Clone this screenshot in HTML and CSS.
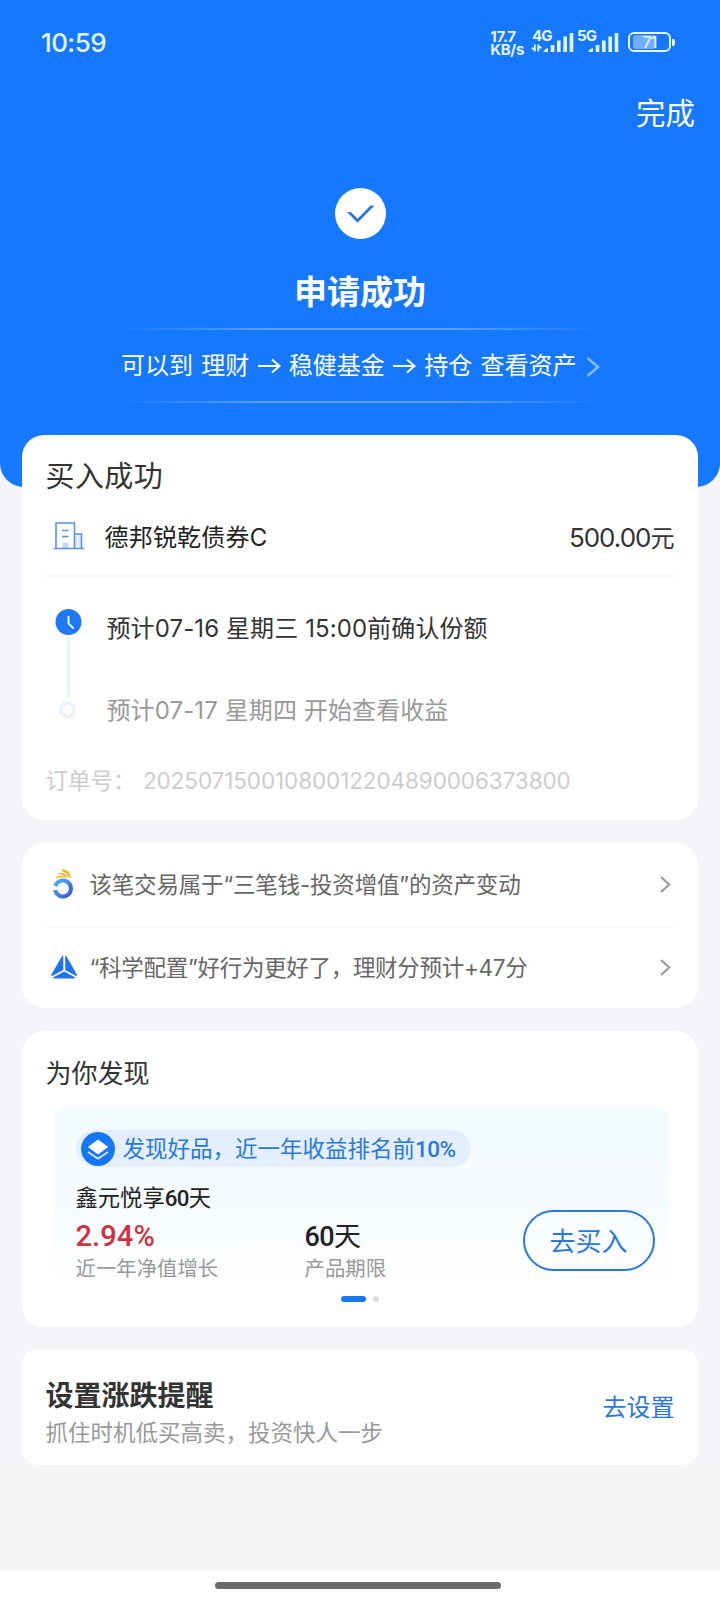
FILE: index.html
```html
<!DOCTYPE html>
<html lang="zh-CN">
<head>
<meta charset="utf-8">
<title>申请成功</title>
<link rel="stylesheet" href="styles.css">
</head>
<body>
<div class="page">
  <header class="hero">
    <div class="status">
      <span class="clock">10:59</span>
      <span class="speed"><span>17.7</span><span>KB/s</span></span>
      <svg class="signals" width="88" height="34" viewBox="0 -4 88 34">
        <text class="net" x="1" y="12">4G</text>
        <text class="net" x="46" y="12">5G</text>
        <path class="arrows" d="M0.800 18.800L3.800 21.300M3.800 15.500V22.500M7.300 22.500V15.500M7.300 16.500L10.300 19.300"/>
        <path class="wedge" d="M12.500 23Q12.500 20.500 17 19V23ZM57.500 23Q57.500 20.500 62 19V23Z"/>
        <path class="bars" d="M21.500 23V16M27.800 23V11.500M34.200 23V7.500M40.500 23V4M66.500 23V16M72.800 23V11.500M79.200 23V7.500M85.500 23V4"/>
      </svg>
      <span class="battery"><span class="level"></span><span class="percent">71</span></span>
      <span class="nub"></span>
    </div>
    <div class="done">完成</div>
    <svg class="check" width="51" height="51" viewBox="0 0 51 51">
      <circle cx="25.500" cy="25.500" r="25.500" fill="#fff"/>
      <path d="M12 24H15.800L22.500 30.800L35.500 17.500H39.500L22.500 34.800Z" fill="#2878dc"/>
    </svg>
    <h1 class="title">申请成功</h1>
    <div class="path">
      <span class="pathtext">可以到 理财 <svg width="23" height="16" viewBox="0 0 23 16"><path d="M0 8H21.500M14 1.500L21.500 8L14 14.500"/></svg> 稳健基金 <svg width="23" height="16" viewBox="0 0 23 16"><path d="M0 8H21.500M14 1.500L21.500 8L14 14.500"/></svg> 持仓 查看资产</span>
      <svg class="more" width="14" height="20" viewBox="0 0 14 20"><path d="M1.500 1L12 10L1.500 19"/></svg>
    </div>
  </header>

  <main class="cards">
    <section class="card order">
      <h2 class="order-title">买入成功</h2>
      <div class="fund">
        <svg class="building" width="32" height="28" viewBox="0 0 32 28">
          <path d="M9.500 20.500H15.500V26H9.500Z" fill="#c3d8fa"/>
          <path d="M22 12.500H28V26H22Z" fill="#e3edfd"/>
          <path d="M3 26V1H21.500V26M21.500 12H28.500V26M0.500 26.500H31M9 8.500H15.500M9 14.500H15.500" fill="none" stroke="#5b8fe0" stroke-width="1.600"/>
        </svg>
        <span class="fund-name">德邦锐乾债券C</span>
        <span class="amount"><span class="num">500.00</span>元</span>
      </div>
      <div class="steps">
        <svg class="track" width="28" height="114" viewBox="0 0 28 114">
          <path d="M14.500 27V90" stroke="#e8f1ff" stroke-width="3.500"/>
          <circle cx="14.500" cy="14" r="13" fill="#1f78f8"/>
          <path d="M14.500 8V15.500L19.500 20.500" fill="none" stroke="#fff" stroke-width="1.800"/>
          <circle cx="13.500" cy="101.500" r="6.700" fill="#fff" stroke="#e8f1ff" stroke-width="3.600"/>
        </svg>
        <div class="step-list">
          <p class="step">预计07-16 星期三 15:00前确认份额</p>
          <p class="step later">预计07-17 星期四 开始查看收益</p>
        </div>
      </div>
      <div class="serial"><span class="serial-label">订单号：</span><span class="serial-no">20250715001080012204890006373800</span></div>
    </section>

    <section class="card notes">
      <div class="note">
        <svg class="note-icon" width="26" height="32" viewBox="0 0 26 32">
          <defs><linearGradient id="ring" x1="0" y1="0" x2="1" y2="1"><stop offset="0" stop-color="#48b4ee"/><stop offset="1" stop-color="#3457d8"/></linearGradient></defs>
          <path d="M4.300 18.200A8 8 0 1 1 4.100 22" fill="none" stroke="url(#ring)" stroke-width="4"/>
          <path d="M10 2.500C13 0 18.500 2 20.500 11C17 7 14 4.500 10 2.500Z" fill="#e9b52a"/>
          <path d="M6.500 5.500C10 3.500 15 5 18.500 10.500C14.500 8 10.500 7 6.500 5.500ZM5 9C9 6.800 13 7.500 16 10C12 9 9 9.500 5.500 10.500Z" fill="#efc23c"/>
        </svg>
        <span class="note-text">该笔交易属于“三笔钱-投资增值”的资产变动</span>
        <svg class="go" width="11" height="17" viewBox="0 0 11 17"><path d="M1 1L9.300 8.500L1 16"/></svg>
      </div>
      <div class="note">
        <svg class="note-icon" width="26" height="32" viewBox="0 0 26 32">
          <path d="M12.300 3.500V18L1.200 24Q-0.200 23.800 0.500 22.300L10.500 5Q11.300 3.600 12.300 3.500ZM14.200 3.500Q15.200 3.800 15.900 5L25.700 22.300Q26.300 23.800 25 24L14.200 18ZM13.200 19.500L24.300 25.500Q24.300 26.600 22.500 26.600H3.500Q2 26.600 2 25.500Z" fill="#2075ee"/>
        </svg>
        <span class="note-text science">“科学配置”好行为更好了，理财分预计+47分</span>
        <svg class="go" width="11" height="17" viewBox="0 0 11 17"><path d="M1 1L9.300 8.500L1 16"/></svg>
      </div>
    </section>

    <section class="card discover">
      <h2 class="discover-title">为你发现</h2>
      <div class="promo">
        <div class="pill">
          <svg width="34" height="34" viewBox="0 0 34 34">
            <circle cx="17" cy="17" r="17" fill="#1677f5"/>
            <path d="M17 8L26.500 15L17 22L7.500 15Z" fill="#fff" stroke="#fff" stroke-linejoin="round"/>
            <path d="M7 20L17 26.700L27 20" fill="none" stroke="#dcebff" stroke-width="1.800"/>
          </svg>
          <span>发现好品，近一年收益排名前<span class="din">10%</span></span>
        </div>
        <div class="product">鑫元悦享<span class="din">60</span>天</div>
        <div class="facts">
          <div class="fact rate"><span class="value red din">2.94%</span><span class="label">近一年净值增长</span></div>
          <div class="fact"><span class="value"><span class="din">60</span>天</span><span class="label">产品期限</span></div>
          <div class="buy">去买入</div>
        </div>
      </div>
      <div class="pager"><span class="on"></span><span class="off"></span></div>
    </section>

    <section class="card remind">
      <div class="remind-copy">
        <h2 class="remind-title">设置涨跌提醒</h2>
        <p class="remind-sub">抓住时机低买高卖，投资快人一步</p>
      </div>
      <span class="setup">去设置</span>
    </section>
  </main>
  <div class="filler"></div>
  <footer class="nav"><span class="handle"></span></footer>
</div>
</body>
</html>
```
FILE: styles.css
```css
* { box-sizing: border-box; }
body, h1, h2, p { margin: 0; font-weight: 400; }
body { width: 720px; font-family: Inter, "Noto Sans CJK SC", sans-serif; color: #333; white-space: nowrap; }
.page { height: 1600px; overflow: hidden; display: flex; flex-direction: column; background: #f4f4f9; }
svg { flex: none; display: block; }
.din { font-family: Roboto, sans-serif; font-weight: 500; letter-spacing: -0.6px; }

.hero { height: 487px; flex: none; background: #1677ff; border-radius: 0 0 24px 24px; color: #fff; display: flex; flex-direction: column; align-items: center; }
.status { width: 100%; height: 84px; padding: 0 45px 0 40px; display: flex; align-items: center; color: #e2f6ff; }
.clock { font-size: 26px; line-height: 30px; font-weight: 500; letter-spacing: -0.6px; margin: 1px auto 0 1px; }
.speed { display: flex; flex-direction: column; font-size: 15px; line-height: 13px; font-weight: 700; letter-spacing: -0.3px; margin-right: 7px; margin-top: 1px; }
.signals { margin-right: 9px; }
.net { font: 700 15px Inter, sans-serif; fill: #e2f6ff; letter-spacing: -0.8px; }
.bars { fill: none; stroke: #e2f6ff; stroke-width: 3.6; }
.wedge { fill: #e2f6ff; }
.arrows { fill: none; stroke: #e2f6ff; stroke-width: 1.8; }
.battery { width: 43px; height: 20px; border: 2px solid #e2f6ff; border-radius: 6px; position: relative; display: flex; align-items: center; justify-content: center; }
.level { position: absolute; left: 3px; top: 1px; width: 23px; height: 14px; background: #70adff; border-radius: 3px; }
.percent { position: relative; font-size: 16px; line-height: 16px; font-weight: 500; letter-spacing: -0.8px; }
.nub { width: 3px; height: 7px; margin-left: 1px; background: #e2f6ff; border-radius: 0 2px 2px 0; }
.done { align-self: flex-end; height: 60px; line-height: 59px; padding-right: 25px; font-size: 29.5px; }
.check { margin-top: 43.5px; }
.title { margin-top: 28.5px; height: 50px; line-height: 50px; font-size: 33px; font-weight: 700; }
.path { margin-top: 11px; width: 480px; height: 75px; padding-left: 1px; display: flex; align-items: center; justify-content: space-between; background: linear-gradient(90deg, transparent, #5a9fff 30%, #5a9fff 70%, transparent) 0 0 / 100% 2px no-repeat, linear-gradient(90deg, transparent, #5a9fff 30%, #5a9fff 70%, transparent) 0 100% / 100% 2px no-repeat; }
.pathtext { font-size: 24px; line-height: 30px; word-spacing: 1.5px; }
.pathtext svg { display: inline-block; fill: none; stroke: #fff; stroke-width: 2; }
.more { margin-top: 3px; fill: none; stroke: #8bbbff; stroke-width: 2.4; }

.cards { margin: -52px 22px 0; display: flex; flex-direction: column; gap: 22.5px; }
.card { background: #fff; border-radius: 22px; padding: 0 23.500px; }
.order { height: 385px; }
.order-title { height: 82px; line-height: 84px; font-size: 29px; letter-spacing: 0.4px; }
.fund { height: 60px; padding-bottom: 16px; display: flex; align-items: center; border-bottom: 2px solid #f7f7f7; }
.building { margin: 0 20px 4px 7px; }
.fund-name { font-size: 24px; line-height: 30px; letter-spacing: 0.2px; color: #222; }
.amount { margin-left: auto; font-size: 24px; line-height: 30px; }
.num { font-size: 26px; letter-spacing: -1px; }
.steps { display: flex; margin-top: 31px; height: 114px; }
.track { margin-left: 8px; }
.step-list { margin-left: 25px; }
.step { height: 82px; line-height: 42px; font-size: 24px; letter-spacing: 0.1px; }
.later { color: #999; }
.serial { display: flex; height: 40px; line-height: 40px; margin-top: 39px; font-size: 22.5px; color: #ccc; }
.serial-label { width: 97.5px; }
.serial-no { letter-spacing: -0.1px; }

.notes { height: 165.5px; }
.note { height: 83px; display: flex; align-items: center; }
.note + .note { height: 82px; border-top: 2px solid #f8f8f8; }
.note-icon { margin: 0 13px 0 5px; }
.note-text { font-size: 22.5px; line-height: 30px; letter-spacing: -0.2px; color: #666; padding-top: 1px; }
.science { letter-spacing: -0.3px; padding-top: 0; }
.go { margin: 0 4px 0 auto; fill: none; stroke: #999; stroke-width: 2; }

.discover { height: 296.500px; }
.discover-title { height: 77px; line-height: 85px; font-size: 26px; }
.promo { height: 188px; margin: 0 6px 0 7px; padding: 22.5px 14px 0 23px; border-radius: 12px; background: linear-gradient(#f3fbff, #f6fbff 50%, #fff 96%); }
.pill { width: 395px; height: 37px; padding-left: 5px; display: flex; align-items: center; gap: 8px; border-radius: 19px; background: #e4effd; color: #2878dc; font-size: 22.5px; line-height: 37px; }
.product { height: 30px; line-height: 30px; margin-top: 16px; font-size: 22.3px; color: #222; }
.facts { display: flex; height: 70px; }
.fact { display: flex; flex-direction: column; }
.rate { width: 229px; }
.value { height: 40px; line-height: 47px; font-size: 27px; color: #222; }
.red { color: #d0313f; font-size: 29px; letter-spacing: 0.1px; }
.label { font-size: 20.4px; line-height: 31px; color: #999; }
.buy { margin: -3px 0 0 auto; width: 132px; height: 61px; border: 2px solid #2878dc; border-radius: 31px; text-align: center; line-height: 60px; font-size: 26px; color: #2878dc; }
.pager { display: flex; justify-content: center; align-items: center; gap: 7px; height: 6px; }
.on { width: 25px; height: 6px; border-radius: 3px; background: #1677f5; }
.off { width: 6px; height: 6px; border-radius: 3px; background: #ddd; }

.remind { height: 115.5px; border-radius: 15px; display: flex; align-items: center; justify-content: space-between; }
.remind-copy { padding-top: 10px; }
.remind-title { font-size: 28px; line-height: 40px; font-weight: 700; }
.remind-sub { font-size: 22.5px; line-height: 33px; color: #999; }
.setup { font-size: 24px; line-height: 30px; color: #2878dc; padding-top: 2px; }

.filler { flex: 1; background: #f5f5f5; }
.nav { height: 30px; background: #fff; display: flex; justify-content: center; padding: 12px 4px 0 0; }
.handle { width: 286px; height: 7px; border-radius: 4px; background: #6b6b6b; }
```
